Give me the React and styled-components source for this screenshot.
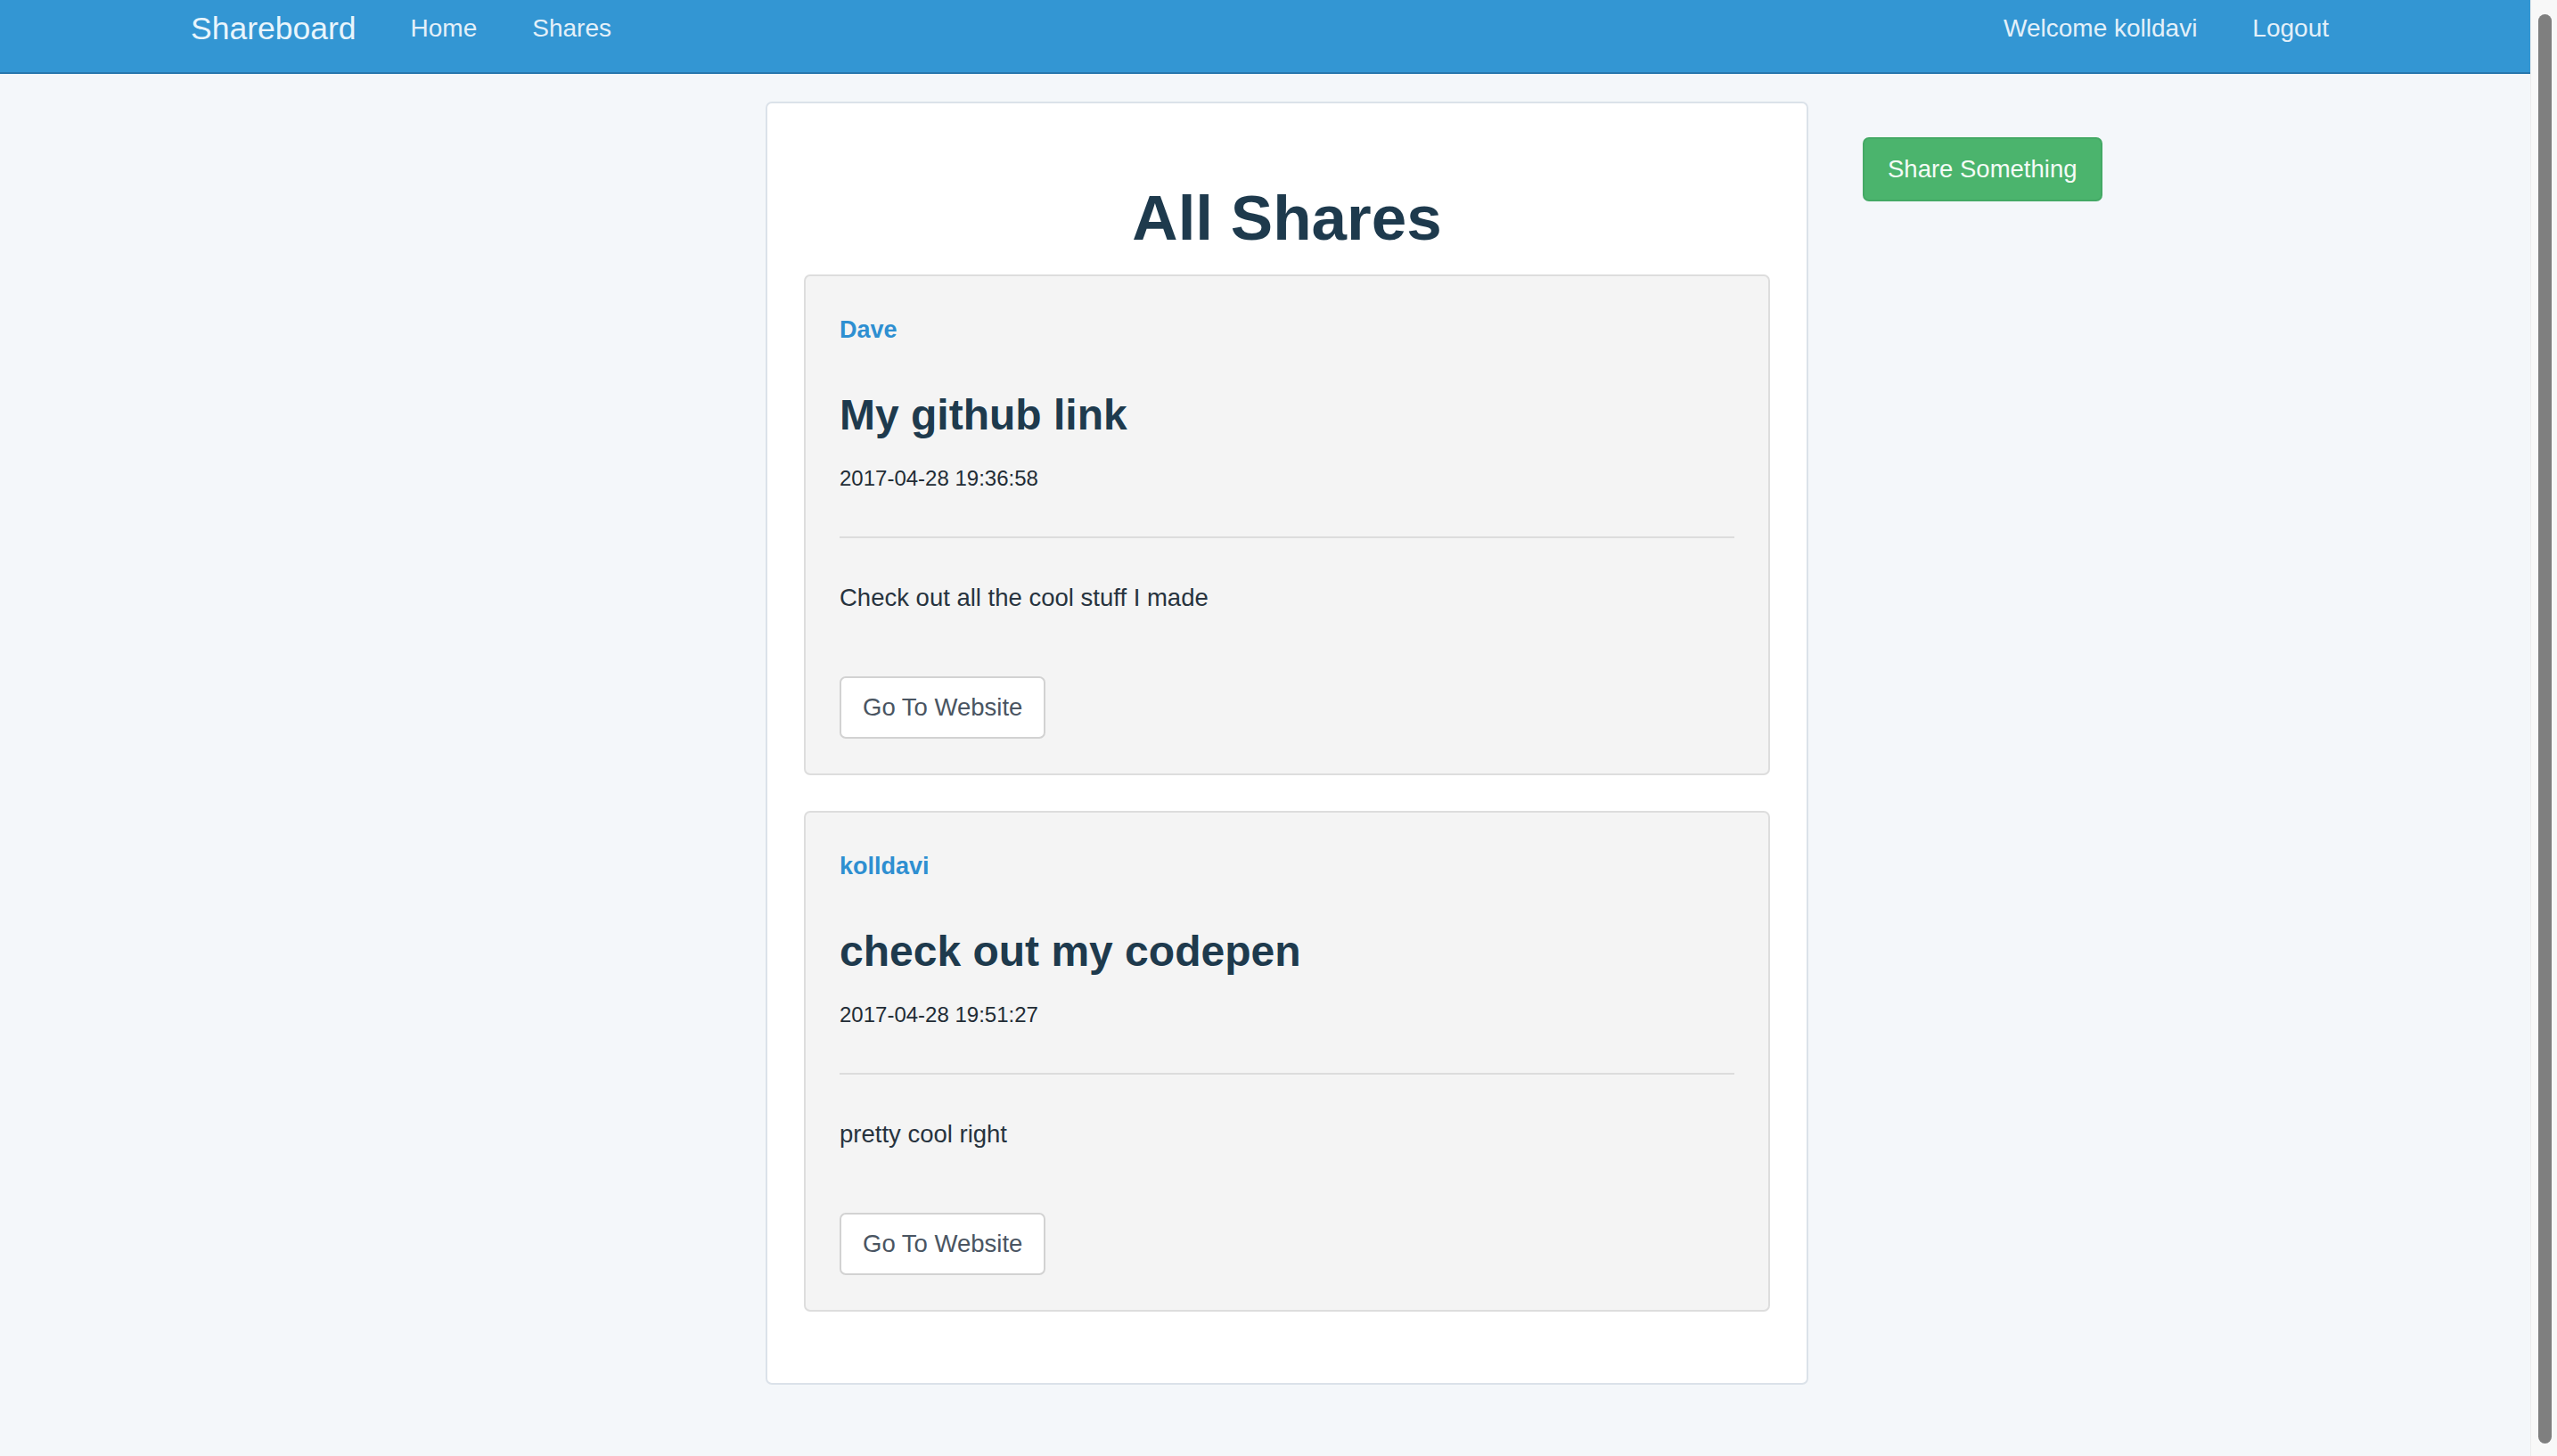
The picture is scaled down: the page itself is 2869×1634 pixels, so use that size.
import styled, { createGlobalStyle } from "styled-components";

const GlobalStyle = createGlobalStyle`
  html, body {
    margin: 0;
    padding: 0;
    background: #f4f7fa;
    font-family: "Liberation Sans", Arial, Helvetica, sans-serif;
    overflow: hidden;
  }
  * {
    box-sizing: border-box;
  }
`;

const Shell = styled.div`
  display: flex;
  height: 100vh;
  width: 100vw;
`;

const Page = styled.div`
  flex: 1;
  min-width: 0;
  background: #f4f7fa;
`;

const Navbar = styled.nav`
  display: flex;
  align-items: flex-start;
  height: 83px;
  padding: 0 195px 0 214px;
  background: #3396d3;
  border-bottom: 2px solid #2877ad;
`;

const Brand = styled.a`
  margin-top: 12px;
  margin-right: 30px;
  font-size: 35.5px;
  line-height: 40px;
  color: #e9f5fc;
  text-decoration: none;
`;

const NavLink = styled.a`
  margin-top: 15px;
  padding: 0 31px;
  font-size: 28px;
  line-height: 34px;
  color: #e3f0f9;
  text-decoration: none;
`;

const NavRight = styled.div`
  display: flex;
  margin-left: auto;
`;

const Row = styled.div`
  display: flex;
  align-items: flex-start;
  gap: 61px;
  padding: 31px 0 0 859px;
`;

const Panel = styled.main`
  width: 1170px;
  background: #ffffff;
  border: 2px solid #dbe2e9;
  border-radius: 7px;
  padding: 0 41px 80px 41px;
`;

const PageTitle = styled.h1`
  margin: 89px 0 23px;
  font-size: 71px;
  line-height: 80px;
  font-weight: 700;
  text-align: center;
  color: #1e3a4d;
`;

const ShareList = styled.div`
  display: flex;
  flex-direction: column;
  gap: 40px;
`;

const ShareCard = styled.article`
  background: #f4f4f4;
  border: 2px solid #dddddd;
  border-radius: 7px;
  padding: 44px 38px 39px;
`;

const Author = styled.a`
  display: block;
  font-size: 27px;
  line-height: 32px;
  font-weight: 700;
  color: #2e8fd1;
  text-decoration: none;
`;

const ShareTitle = styled.h2`
  margin: 52px 0 0;
  font-size: 48px;
  line-height: 56px;
  font-weight: 700;
  color: #1e3a4d;
`;

const Stamp = styled.small`
  display: block;
  margin-top: 27.5px;
  font-size: 24px;
  line-height: 30px;
  color: #222c35;
`;

const Divider = styled.hr`
  margin: 50px 0 50px;
  border: 0;
  border-top: 2px solid #dcdcdc;
`;

const Body = styled.p`
  margin: 0;
  font-size: 27.5px;
  line-height: 34px;
  color: #27333e;
`;

const LinkButton = styled.a`
  display: inline-block;
  margin-top: 71.6px;
  padding: 13px 24px;
  font-size: 27.5px;
  line-height: 40px;
  color: #4a5562;
  background: #ffffff;
  border: 2px solid #d2d2d2;
  border-radius: 7px;
  text-decoration: none;
`;

const Sidebar = styled.aside`
  padding-top: 40px;
`;

const ShareButton = styled.a`
  display: inline-block;
  padding: 14px 26px;
  font-size: 27.5px;
  line-height: 40px;
  color: #f4fbf6;
  background: #4bb46d;
  border: 2px solid #44a965;
  border-radius: 7px;
  text-decoration: none;
`;

const ScrollTrack = styled.div`
  display: flex;
  flex: none;
  width: 30px;
  height: 100vh;
  padding: 16px 6px 14px 8px;
  background: #f8f8f8;
  border-left: 1px solid #ececec;
`;

const ScrollThumb = styled.div`
  flex: 1;
  background: #7f7f7f;
  border-radius: 8px;
`;

const shares = [
  {
    user: "Dave",
    title: "My github link",
    date: "2017-04-28 19:36:58",
    body: "Check out all the cool stuff I made",
  },
  {
    user: "kolldavi",
    title: "check out my codepen",
    date: "2017-04-28 19:51:27",
    body: "pretty cool right",
  },
];

export default function App() {
  return (
    <Shell>
      <GlobalStyle />
      <Page>
        <Navbar>
          <Brand href="#">Shareboard</Brand>
          <NavLink href="#">Home</NavLink>
          <NavLink href="#">Shares</NavLink>
          <NavRight>
            <NavLink href="#">Welcome kolldavi</NavLink>
            <NavLink href="#">Logout</NavLink>
          </NavRight>
        </Navbar>
        <Row>
          <Panel>
            <PageTitle>All Shares</PageTitle>
            <ShareList>
              {shares.map((share) => (
                <ShareCard key={share.date}>
                  <Author href="#">{share.user}</Author>
                  <ShareTitle>{share.title}</ShareTitle>
                  <Stamp>{share.date}</Stamp>
                  <Divider />
                  <Body>{share.body}</Body>
                  <LinkButton href="#">Go To Website</LinkButton>
                </ShareCard>
              ))}
            </ShareList>
          </Panel>
          <Sidebar>
            <ShareButton href="#">Share Something</ShareButton>
          </Sidebar>
        </Row>
      </Page>
      <ScrollTrack>
        <ScrollThumb />
      </ScrollTrack>
    </Shell>
  );
}
